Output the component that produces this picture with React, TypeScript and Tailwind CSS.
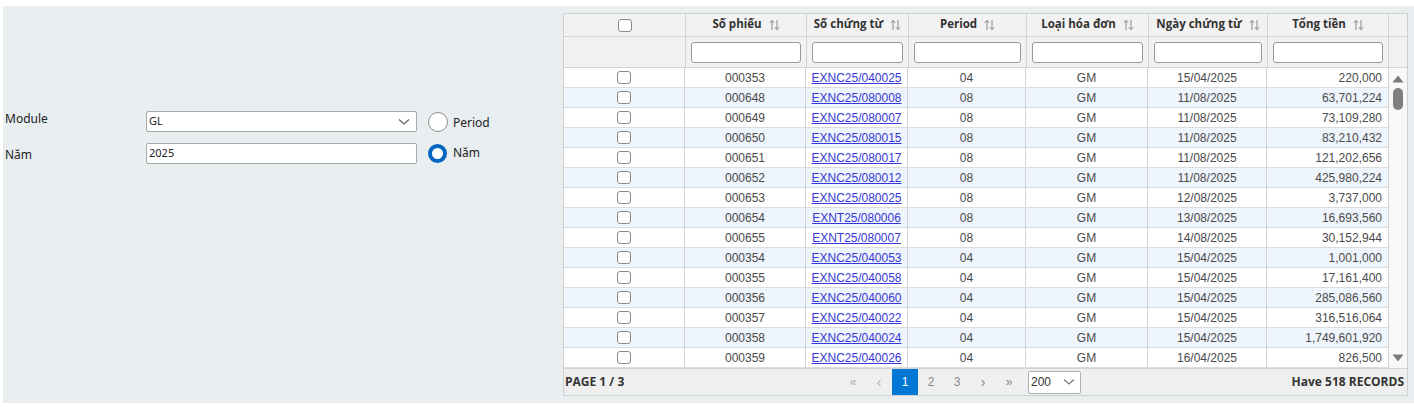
import React from "react";

const rows: [string, string, string, string, string, string][] = [
  ["000353", "EXNC25/040025", "04", "GM", "15/04/2025", "220,000"],
  ["000648", "EXNC25/080008", "08", "GM", "11/08/2025", "63,701,224"],
  ["000649", "EXNC25/080007", "08", "GM", "11/08/2025", "73,109,280"],
  ["000650", "EXNC25/080015", "08", "GM", "11/08/2025", "83,210,432"],
  ["000651", "EXNC25/080017", "08", "GM", "11/08/2025", "121,202,656"],
  ["000652", "EXNC25/080012", "08", "GM", "11/08/2025", "425,980,224"],
  ["000653", "EXNC25/080025", "08", "GM", "12/08/2025", "3,737,000"],
  ["000654", "EXNT25/080006", "08", "GM", "13/08/2025", "16,693,560"],
  ["000655", "EXNT25/080007", "08", "GM", "14/08/2025", "30,152,944"],
  ["000354", "EXNC25/040053", "04", "GM", "15/04/2025", "1,001,000"],
  ["000355", "EXNC25/040058", "04", "GM", "15/04/2025", "17,161,400"],
  ["000356", "EXNC25/040060", "04", "GM", "15/04/2025", "285,086,560"],
  ["000357", "EXNC25/040022", "04", "GM", "15/04/2025", "316,516,064"],
  ["000358", "EXNC25/040024", "04", "GM", "15/04/2025", "1,749,601,920"],
  ["000359", "EXNC25/040026", "04", "GM", "16/04/2025", "826,500"],
];

const headers: [string, string][] = [
  ["Số phiếu", "w-[121px]"],
  ["Số chứng từ", "w-[102px]"],
  ["Period", "w-[118px]"],
  ["Loại hóa đơn", "w-[122px]"],
  ["Ngày chứng từ", "w-[119px]"],
  ["Tổng tiền", "w-[121px]"],
];

function SortIcon() {
  return (
    <svg width="11" height="12" viewBox="0 0 11 12" className="ml-[7px] shrink-0">
      <path d="M3 11V1.5M0.8 3.8L3 1.3L5.2 3.8" stroke="#8a8a8a" strokeWidth="1" fill="none" />
      <path d="M8 1V10.5M5.8 8.2L8 10.7L10.2 8.2" stroke="#8a8a8a" strokeWidth="1" fill="none" />
    </svg>
  );
}

function Box() {
  return <div className="w-[14px] h-[13px] rounded-[3px] border border-[#8a8a8a] bg-white" />;
}

export default function App() {
  return (
    <div className="w-[1414px] h-[408px] bg-white pt-[6px] pl-[3px] overflow-hidden" style={{ fontFamily: '"Noto Sans", sans-serif' }}>
      <div className="h-[397px] bg-[#e9eef1] flex">
        {/* Left form */}
        <div className="w-[560px] shrink-0 pt-[105px] pl-[2px]">
          <div className="flex items-start h-[21px]">
            <div className="w-[141px] text-[12px] leading-[16px] text-[#222] pt-0">Module</div>
            <div className="w-[271px] h-[21px] bg-white border border-[#a9a9a9] rounded-[2px] flex items-center pl-[2px] pr-[6px]">
              <span className="flex-1 text-[11px] text-[#222]">GL</span>
              <svg width="12" height="8" viewBox="0 0 12 8"><path d="M1 1.5L6 6L11 1.5" stroke="#666" strokeWidth="1.2" fill="none" /></svg>
            </div>
            <div className="ml-[11px] mt-[1px] w-[20px] h-[20px] rounded-full border border-[#8c8c8c] bg-white" />
            <span className="ml-[5px] mt-[2px] text-[12px] text-[#222] leading-[20px]">Period</span>
          </div>
          <div className="flex items-start h-[21px] mt-[11px]">
            <div className="w-[141px] text-[12px] leading-[16px] text-[#222] pt-[4px]">Năm</div>
            <div className="w-[271px] h-[21px] bg-white border border-[#a9a9a9] rounded-[2px] flex items-center pl-[2px]">
              <span className="text-[11px] text-[#222]">2025</span>
            </div>
            <div className="ml-[11px] mt-[1px] w-[19px] h-[19px] rounded-full border-[4px] border-[#0067c0] bg-white" />
            <span className="ml-[6px] text-[12px] text-[#222] leading-[19px]">Năm</span>
          </div>
        </div>

        {/* Table */}
        <div className="mt-[7px] w-[845px] h-[383px] shrink-0 border border-[#cfcfcf] bg-white flex flex-col" style={{ fontFamily: '"Liberation Sans", Arial, sans-serif' }}>
          {/* Header */}
          <div className="flex h-[23px] bg-[#f2f2f2] border-b border-[#d3d3d3]">
            <div className="w-[122px] border-r border-[#d3d3d3] flex items-center justify-center"><Box /></div>
            {headers.map(([h, w]) => (
              <div key={h} className={`${w} border-r border-[#d3d3d3] flex items-center justify-center text-[11.5px] font-bold text-[#333]`} style={{ fontFamily: '"Open Sans", sans-serif' }}>
                <span className="pb-[2px]">{h}</span>
                <SortIcon />
              </div>
            ))}
            <div className="flex-1" />
          </div>
          {/* Filter row */}
          <div className="flex h-[31px] bg-[#f2f2f2] border-b border-[#d3d3d3]">
            <div className="w-[122px] border-r border-[#d3d3d3]" />
            {headers.map(([h, w]) => (
              <div key={h} className={`${w} border-r border-[#d3d3d3] flex items-center px-[5px]`}>
                <div className="w-full h-[21px] bg-white border border-[#9a9a9a] rounded-[3px]" />
              </div>
            ))}
            <div className="flex-1" />
          </div>
          {/* Body */}
          <div className="flex flex-1">
            <div className="w-[825px]">
              {rows.map((r, i) => (
                <div key={i} className={`flex h-[20px] border-b border-[#dcdcdc] text-[12px] text-[#4a4a4a] ${i % 2 === 1 ? "bg-[#eef5fc]" : "bg-white"}`}>
                  <div className="w-[121px] border-r border-[#d3d3d3] flex items-center justify-center"><Box /></div>
                  <div className="w-[121px] border-r border-[#d3d3d3] flex items-center justify-center">{r[0]}</div>
                  <div className="w-[102px] border-r border-[#d3d3d3] flex items-center justify-center">
                    <span className="text-[#3737d8] underline">{r[1]}</span>
                  </div>
                  <div className="w-[118px] border-r border-[#d3d3d3] flex items-center justify-center">{r[2]}</div>
                  <div className="w-[122px] border-r border-[#d3d3d3] flex items-center justify-center">{r[3]}</div>
                  <div className="w-[119px] border-r border-[#d3d3d3] flex items-center justify-center">{r[4]}</div>
                  <div className="w-[122px] border-r border-[#d3d3d3] flex items-center justify-end pr-[6px]">{r[5]}</div>
                </div>
              ))}
            </div>
            {/* Scrollbar */}
            <div className="flex-1 bg-[#f8f8f8] flex flex-col items-center pt-[7px] pb-[6px]">
              <svg width="12" height="8" viewBox="0 0 12 8"><path d="M6 0.5L11.5 7.5H0.5Z" fill="#7b7b7b" /></svg>
              <div className="mt-[5px] w-[10px] h-[22px] rounded-full bg-[#7f7f7f]" />
              <div className="flex-1" />
              <svg width="12" height="8" viewBox="0 0 12 8"><path d="M0.5 0.5H11.5L6 7.5Z" fill="#7b7b7b" /></svg>
            </div>
          </div>
          {/* Footer */}
          <div className="h-[27px] bg-[#efefef] border-t border-[#d3d3d3] flex items-center text-[12px]" style={{ fontFamily: '"Open Sans", sans-serif' }}>
            <div className="w-[276px] pl-[1px] font-bold text-[#333]">PAGE 1 / 3</div>
            <div className="flex h-full" style={{ fontFamily: '"Liberation Sans", Arial, sans-serif' }}>
              <div className="w-[26px] flex items-center justify-center text-[#b0b0b0] text-[12px]">«</div>
              <div className="w-[26px] flex items-center justify-center text-[#b0b0b0] text-[14px]">‹</div>
              <div className="w-[26px] flex items-center justify-center bg-[#0078d4] text-white text-[12px]">1</div>
              <div className="w-[26px] flex items-center justify-center text-[#888] text-[12px]">2</div>
              <div className="w-[26px] flex items-center justify-center text-[#888] text-[12px]">3</div>
              <div className="w-[26px] flex items-center justify-center text-[#888] text-[14px]">›</div>
              <div className="w-[26px] flex items-center justify-center text-[#888] text-[12px]">»</div>
            </div>
            <div className="ml-[6px] w-[53px] h-[23px] bg-white border border-[#b0b0b0] rounded-[2px] flex items-center pl-[2px] pr-[5px]" style={{ fontFamily: '"Liberation Sans", Arial, sans-serif' }}>
              <span className="flex-1 text-[12px] text-[#333]">200</span>
              <svg width="12" height="8" viewBox="0 0 12 8"><path d="M1 1.5L6 6L11 1.5" stroke="#777" strokeWidth="1.2" fill="none" /></svg>
            </div>
            <div className="flex-1 text-right pr-[3px] font-bold text-[#333]">Have 518 RECORDS</div>
          </div>
        </div>
      </div>
    </div>
  );
}
